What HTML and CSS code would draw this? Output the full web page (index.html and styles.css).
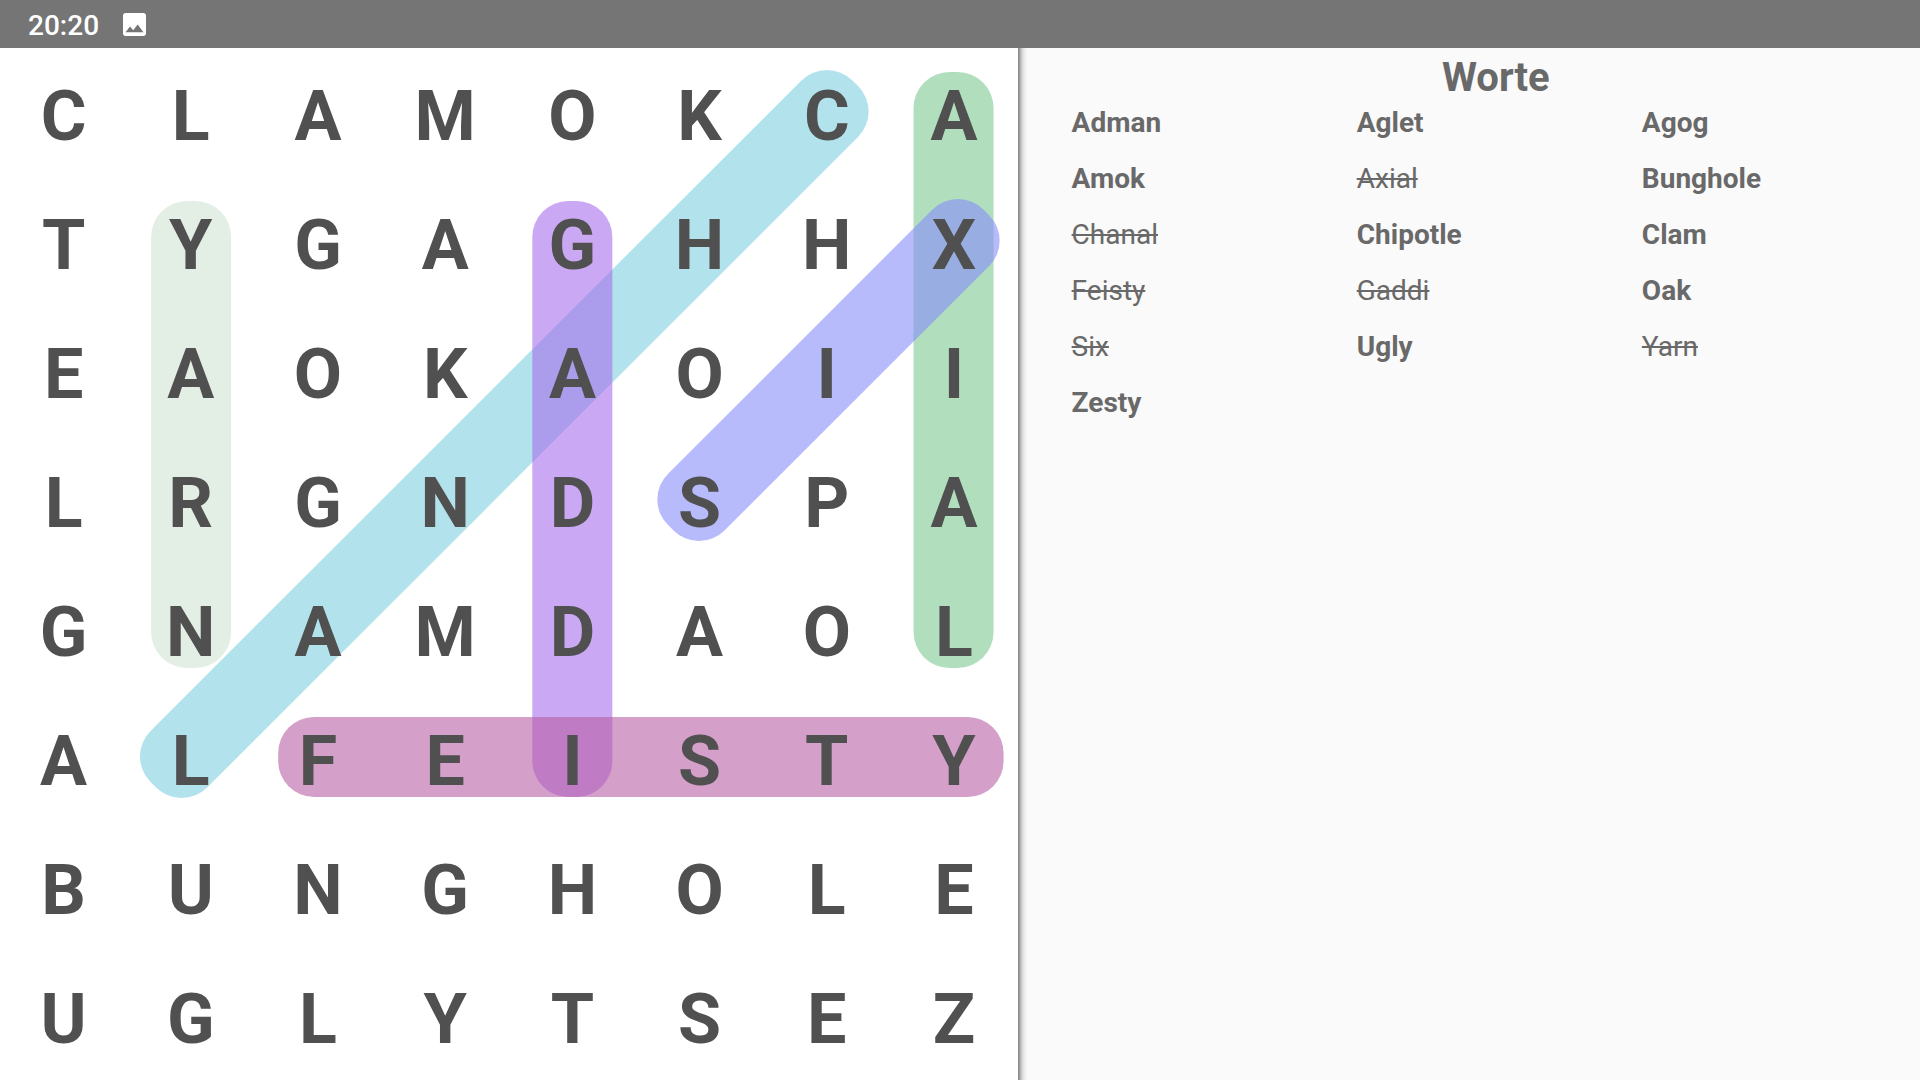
FILE: index.html
```html
<!DOCTYPE html>
<html lang="de">
<head>
  <meta charset="UTF-8">
  <meta name="viewport" content="width=device-width, initial-scale=1">
  <title>Worte</title>
  <link rel="stylesheet" href="styles.css">
</head>
<body>
  <header class="status-bar">
    <time>20:20</time>
    <svg class="photo-icon" viewBox="3 3 18 18" aria-hidden="true">
      <path fill="#fff" d="M21 19V5c0-1.100-.9-2-2-2H5c-1.100 0-2 .9-2 2v14c0 1.100.9 2 2 2h14c1.100 0 2-.9 2-2zM8.500 13.500l2.500 3.010L14.500 12l4.500 6H5l3.500-4.500z"/>
    </svg>
  </header>
  <main class="game">
    <section class="board">
      <!-- found words -->
      <svg class="marks" viewBox="0 0 1017 1032" preserveAspectRatio="none" aria-hidden="true">
        <rect class="chanal" x="8" y="346" width="992" height="80" rx="36" transform="rotate(-45 504 386)"/>
        <rect class="yarn" x="151" y="153" width="80" height="467" rx="36"/>
        <rect class="axial" x="913" y="24" width="80" height="596" rx="36"/>
        <rect class="gaddi" x="532" y="153" width="80" height="596" rx="36"/>
        <rect class="feisty" x="278" y="669" width="725" height="80" rx="36"/>
        <rect class="six" x="605" y="282" width="446" height="80" rx="36" transform="rotate(-45 828 322)"/>
      </svg>
      <div class="letters">
        <span>C</span><span>L</span><span>A</span><span>M</span><span>O</span><span>K</span><span>C</span><span>A</span>
        <span>T</span><span>Y</span><span>G</span><span>A</span><span>G</span><span>H</span><span>H</span><span>X</span>
        <span>E</span><span>A</span><span>O</span><span>K</span><span>A</span><span>O</span><span>I</span><span>I</span>
        <span>L</span><span>R</span><span>G</span><span>N</span><span>D</span><span>S</span><span>P</span><span>A</span>
        <span>G</span><span>N</span><span>A</span><span>M</span><span>D</span><span>A</span><span>O</span><span>L</span>
        <span>A</span><span>L</span><span>F</span><span>E</span><span>I</span><span>S</span><span>T</span><span>Y</span>
        <span>B</span><span>U</span><span>N</span><span>G</span><span>H</span><span>O</span><span>L</span><span>E</span>
        <span>U</span><span>G</span><span>L</span><span>Y</span><span>T</span><span>S</span><span>E</span><span>Z</span>
      </div>
    </section>
    <section class="words">
      <h1>Worte</h1>
      <ul>
        <li>Adman</li>
        <li>Aglet</li>
        <li>Agog</li>
        <li>Amok</li>
        <li class="found">Axial</li>
        <li>Bunghole</li>
        <li class="found">Chanal</li>
        <li>Chipotle</li>
        <li>Clam</li>
        <li class="found">Feisty</li>
        <li class="found">Gaddi</li>
        <li>Oak</li>
        <li class="found">Six</li>
        <li>Ugly</li>
        <li class="found">Yarn</li>
        <li>Zesty</li>
      </ul>
    </section>
  </main>
</body>
</html>
```
FILE: styles.css
```css
* {
  box-sizing: border-box;
}
body {
  font-family: Roboto, Arial, sans-serif;
  margin: 0;
  min-height: 100vh;
  display: flex;
  flex-direction: column;
  background: #fafafa;
  color: #696969;
}
.status-bar {
  display: flex;
  align-items: center;
  gap: 24px;
  height: 48px;
  padding: 0 28px;
  background: #757575;
  color: white;
  font-size: 28px;
  font-weight: 500;
}
.status-bar time {
  padding-top: 2px;
}
.photo-icon {
  width: 23px;
  height: 23px;
}
.game {
  flex: 1;
  display: flex;
}
.board {
  position: relative;
  width: 53%;
  background: white;
}
/* lies under the letters */
.marks {
  position: absolute;
  top: 0;
  left: 0;
  width: 100%;
  height: 100%;
}
.marks rect {
  fill-opacity: 0.6;
}
.chanal {
  fill: #7fd0df;
}
.yarn {
  fill: #d0e3d2;
}
.axial {
  fill: #7dca93;
}
.gaddi {
  fill: #a76eed;
}
.feisty {
  fill: #b75fa5;
}
.six {
  fill: #878cf8;
}
.letters {
  position: relative;
  display: grid;
  grid-template-columns: repeat(8, 1fr);
  grid-auto-rows: 1fr;
  height: 100%;
  color: #505050;
  font-size: 70px;
  font-weight: bold;
  line-height: 82px;
}
.letters span {
  display: flex;
  align-items: center;
  justify-content: center;
  padding-top: 6px;
}
.words {
  flex: 1;
  padding: 13px 0 0 54px;
  background: linear-gradient(to right, #808080, #a8a8a8 2px, #d4d4d4 4px, #f0f0f0 7px, #fafafa 10px);
}
.words h1 {
  margin: 0;
  font-size: 40px;
  line-height: 34px;
  text-align: center;
}
.words ul {
  display: grid;
  grid-template-columns: repeat(3, 1fr);
  column-gap: 7px;
  margin: 0;
  padding: 0;
  list-style: none;
  font-size: 28px;
  font-weight: bold;
  line-height: 56px;
}
.words .found {
  font-weight: normal;
  text-decoration: line-through 2px;
}
```
